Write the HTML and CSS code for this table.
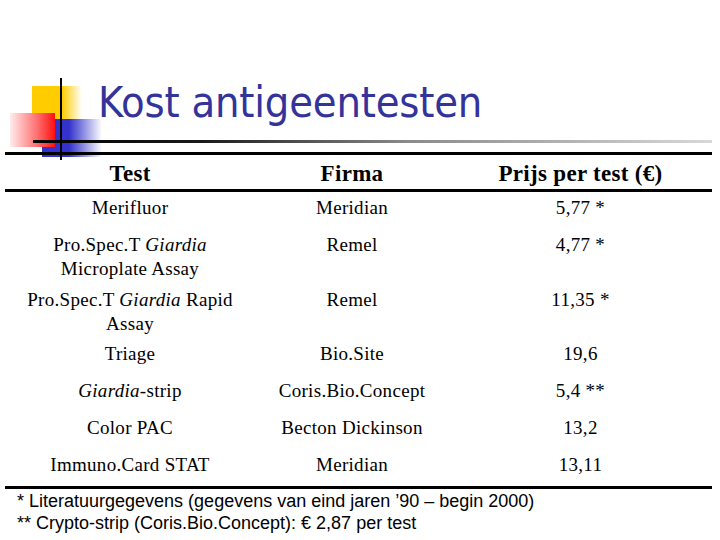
FILE: index.html
```html
<!DOCTYPE html>
<html lang="nl">
<head>
<meta charset="utf-8">
<title>Kost antigeentesten</title>
<link rel="stylesheet" href="styles.css">
</head>
<body>
<div class="slide">
  <svg class="logo" width="120" height="170" viewBox="0 0 120 170" aria-hidden="true">
    <defs>
      <linearGradient id="gy" x1="0" y1="0" x2="1" y2="0">
        <stop offset="0" stop-color="#ffcc00"/>
        <stop offset="0.6" stop-color="#ffcc00"/>
        <stop offset="1" stop-color="#ffcc00" stop-opacity="0"/>
      </linearGradient>
      <linearGradient id="gb" x1="0" y1="0" x2="1" y2="0">
        <stop offset="0" stop-color="#3333cc"/>
        <stop offset="0.45" stop-color="#3333cc"/>
        <stop offset="1" stop-color="#3333cc" stop-opacity="0"/>
      </linearGradient>
      <linearGradient id="gr" x1="0" y1="0" x2="1" y2="0">
        <stop offset="0" stop-color="#ffecec"/>
        <stop offset="0.6" stop-color="#ff7070"/>
        <stop offset="1" stop-color="#ff1010"/>
      </linearGradient>
    </defs>
    <rect x="32" y="86" width="50" height="34" fill="url(#gy)"/>
    <rect x="42" y="119" width="60" height="38" fill="url(#gb)"/>
    <rect x="10" y="113" width="45" height="34" fill="url(#gr)"/>
    <rect x="60" y="78" width="2" height="82" fill="#000"/>
  </svg>
  <div class="content">
    <h1 class="title">Kost antigeentesten</h1>
    <div class="rule-fade"></div>
    <div class="grid">
      <div class="cell head">Test</div>
      <div class="cell head">Firma</div>
      <div class="cell head">Prijs per test (€)</div>

      <div class="cell">Merifluor</div>
      <div class="cell">Meridian</div>
      <div class="cell">5,77 *</div>

      <div class="cell">Pro.Spec.T <i>Giardia</i><br>Microplate Assay</div>
      <div class="cell">Remel</div>
      <div class="cell">4,77 *</div>

      <div class="cell">Pro.Spec.T <i>Giardia</i> Rapid<br>Assay</div>
      <div class="cell">Remel</div>
      <div class="cell">11,35 *</div>

      <div class="cell">Triage</div>
      <div class="cell">Bio.Site</div>
      <div class="cell">19,6</div>

      <div class="cell"><i>Giardia</i>-strip</div>
      <div class="cell">Coris.Bio.Concept</div>
      <div class="cell">5,4 **</div>

      <div class="cell">Color PAC</div>
      <div class="cell">Becton Dickinson</div>
      <div class="cell">13,2</div>

      <div class="cell">Immuno.Card STAT</div>
      <div class="cell">Meridian</div>
      <div class="cell">13,11</div>
    </div>
    <div class="notes">
      <p>* Literatuurgegevens (gegevens van eind jaren ’90 – begin 2000)</p>
      <p>** Crypto-strip (Coris.Bio.Concept): € 2,87 per test</p>
    </div>
  </div>
</div>
</body>
</html>
```
FILE: styles.css
```css
html, body {
  margin: 0;
  padding: 0;
  background: #fff;
}

.slide {
  position: relative;
  width: 720px;
  height: 540px;
  overflow: hidden;
  background: #fff;
}

.logo {
  position: absolute;
  left: 0;
  top: 0;
}

.content {
  position: relative;
  padding-top: 81px;
}

.title {
  margin: 0;
  padding-left: 98px;
  font-family: "DejaVu Sans Condensed", "DejaVu Sans", sans-serif;
  font-stretch: condensed;
  font-weight: normal;
  font-size: 43px;
  line-height: 43px;
  height: 43px;
  letter-spacing: -0.2px;
  color: #333399;
}

.rule-fade {
  margin-top: 16px;
  margin-left: 33px;
  width: 679px;
  height: 3px;
  background: linear-gradient(to right, #000 0%, #1a1a1a 25%, #8a8a8a 55%, #d8d8d8 100%);
}

.grid {
  margin-top: 9px;
  margin-left: 5px;
  width: 707px;
  display: grid;
  grid-template-columns: 250px 194px 263px;
  grid-template-rows: 37px 37px 55px 54px 37px 37px 37px 37px;
  border-top: 3px solid #000;
  border-bottom: 3px solid #000;
  font-family: "Liberation Serif", "Times New Roman", serif;
  color: #000;
}

.cell {
  box-sizing: border-box;
  text-align: center;
  font-size: 19px;
  line-height: 24px;
  letter-spacing: 0.3px;
  padding-top: 4px;
}

.cell.head {
  font-weight: bold;
  font-size: 23px;
  line-height: 23px;
  letter-spacing: 0.3px;
  padding-top: 7px;
  border-bottom: 3px solid #000;
}

.notes {
  padding-left: 17px;
  padding-top: 1px;
  font-family: "Liberation Sans", Arial, sans-serif;
  font-size: 18px;
  line-height: 22px;
  color: #000;
}

.notes p {
  margin: 0;
}
```
